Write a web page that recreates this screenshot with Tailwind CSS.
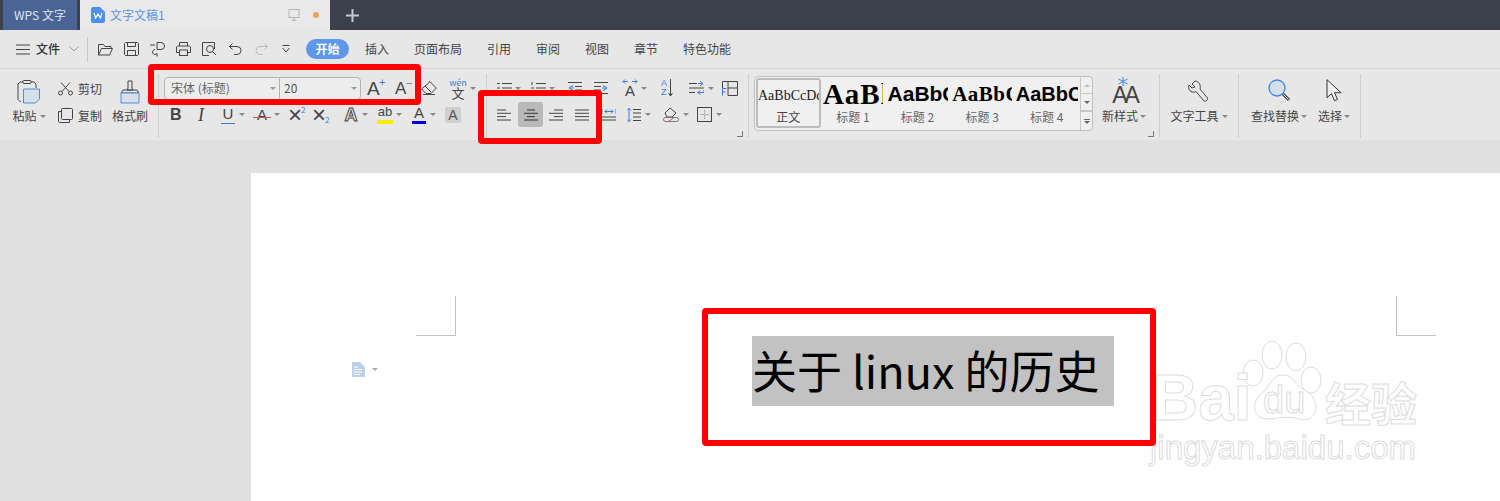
<!DOCTYPE html>
<html lang="zh-CN">
<head>
    <meta charset="UTF-8">
    <script src="https://cdn.jsdelivr.net/npm/@tailwindcss/browser@4"></script>
    <title>WPS 文字</title>
</head>
<body class="w-[1500px] h-[501px] overflow-hidden relative bg-[#e0e0e0] text-[#444] text-[12px] font-['Noto_Sans_CJK_SC','Noto_Sans',sans-serif]">

    <!-- tabs -->
    <div class="h-[30px] bg-[#3c404d] flex items-stretch">
        <div class="ml-[3px] w-[74px] bg-[#4a6593] text-[#dfe6f2] flex items-center justify-center">WPS 文字</div>
        <div class="ml-[3px] w-[250px] bg-[#e9e9e9] flex items-center">
            <svg class="ml-[11px] w-[14px] h-[16px]" viewBox="0 0 14 16"><path d="M2 0h7l5 5v9a2 2 0 0 1-2 2H2a2 2 0 0 1-2-2V2a2 2 0 0 1 2-2z" fill="#4d8ff0"/><path d="M3 6l1.600 5L7 7l2.400 4L11 6" fill="none" stroke="#fff" stroke-width="1.200"/></svg>
            <span class="ml-[5px] text-[#5b94ea]">文字文稿1</span>
            <svg class="ml-[123px] w-[12px] h-[14px]" viewBox="0 0 12 14" fill="none" stroke="#b5b5b5"><rect x="1" y="1.500" width="10" height="8"/><path d="M6 9.500v3M3.500 12.500h5"/></svg>
            <span class="ml-[13px] w-[6px] h-[6px] rounded-full bg-[#eba35c]"></span>
        </div>
        <div class="ml-[16px] flex items-center">
            <svg class="w-[13px] h-[13px]" viewBox="0 0 13 13" stroke="#c6c8ce" stroke-width="2"><path d="M6.500 0v13M0 6.500h13"/></svg>
        </div>
    </div>

    <!-- menu -->
    <div class="h-[39px] bg-[#e7e7e7] flex items-center border-b border-[#d9d9d9]">
        <svg class="ml-[16px] w-[14px] h-[11px]" viewBox="0 0 14 11" stroke="#444"><path d="M0 1h14M0 5.500h14M0 10h14"/></svg>
        <span class="ml-[6px] w-[24px] font-medium text-[#333]">文件</span>
        <svg class="ml-[9px] w-[10px] h-[6px]" viewBox="0 0 10 6" fill="none" stroke="#999"><path d="M.5.500L5 5l4.500-4.500"/></svg>
        <span class="ml-[8px] w-px h-[25px] bg-[#c8c8c8]"></span>
        <svg class="ml-[10px] w-[15px] h-[13px]" viewBox="0 0 15 13" fill="none" stroke="#444"><path d="M.5 12V1.500h5l1.500 2h6v2M.5 12h11l3-6.500h-11z"/></svg>
        <svg class="ml-[11px] w-[15px] h-[14px]" viewBox="0 0 15 14" fill="none" stroke="#444"><path d="M1.500.500h12l1 1v11l-1 1h-12l-1-1v-11z"/><path d="M3.500.500v4h8v-4M3.500 13.500v-5h8v5"/></svg>
        <svg class="ml-[11px] w-[15px] h-[15px]" viewBox="0 0 15 15" fill="none" stroke="#444"><path d="M0 3h5M7 .500h4a3.500 3.500 0 0 1 0 7H7v-7zM5 7.500a2.500 2.500 0 1 0 2 4v3"/></svg>
        <svg class="ml-[11px] w-[15px] h-[14px]" viewBox="0 0 15 14" fill="none" stroke="#444"><path d="M3.500 4V.500h8V4M3.500 10.500h-3V5l1-1h12l1 1v5.500h-3"/><rect x="3.500" y="8" width="8" height="5.500"/></svg>
        <svg class="ml-[11px] w-[15px] h-[14px]" viewBox="0 0 15 14" fill="none" stroke="#444"><path d="M7 13.500H.5V.500h12V7"/><circle cx="8" cy="7" r="3.500"/><path d="M10.500 9.500l3.500 3.500"/></svg>
        <svg class="ml-[12px] w-[13px] h-[12px]" viewBox="0 0 13 12" fill="none" stroke="#444"><path d="M3.500.500L.5 3.500l3 3M.5 3.500H8a4 4 0 0 1 0 8H5"/></svg>
        <svg class="ml-[13px] w-[13px] h-[12px]" viewBox="0 0 13 12" fill="none" stroke="#bcbcbc"><path d="M9.500.500l3 3-3 3M12.500 3.500H5a4 4 0 0 0 0 8h3"/></svg>
        <svg class="ml-[14px] w-[8px] h-[8px]" viewBox="0 0 8 8" fill="none" stroke="#444"><path d="M.5.500h7M.5 3l3.500 4L7.500 3"/></svg>
        <span class="ml-[16px] w-[43px] h-[20px] rounded-full bg-[#5f97ea] text-white font-bold flex items-center justify-center">开始</span>
        <span class="ml-[16px] w-[24px]">插入</span>
        <span class="ml-[25px] w-[48px]">页面布局</span>
        <span class="ml-[25px] w-[24px]">引用</span>
        <span class="ml-[25px] w-[24px]">审阅</span>
        <span class="ml-[25px] w-[24px]">视图</span>
        <span class="ml-[25px] w-[24px]">章节</span>
        <span class="ml-[25px] w-[48px]">特色功能</span>
    </div>

    <!-- ribbon -->
    <div class="h-[71px] bg-[#e7e7e7] flex pt-[5px]">

        <!-- clipboard -->
        <div class="w-[159px] h-[64px] border-r border-[#cfcfcf] flex shrink-0">
            <div class="w-[56px] flex flex-col items-center">
                <svg class="mt-[6px] w-[23px] h-[24px]" viewBox="0 0 23 24" fill="none"><path d="M4 21.500H3l-2-2V4l2-2h3M14 2h3l2 2v4" stroke="#444"/><rect x="6" y=".5" width="8" height="3" rx="1" stroke="#444"/><path d="M6.500 9h16v10l-4 4h-12z" fill="#d8dfe9" stroke="#4d8fe0"/></svg>
                <span class="mt-[3px] ml-[2px] h-[18px] flex items-center"><span>粘贴</span><span class="ml-[3px] border-x-[3px] border-t-[3px] border-x-transparent border-t-[#888]"></span></span>
            </div>
            <div class="ml-[2px] w-[50px] flex flex-col">
                <div class="h-[27px] mt-[1px] flex items-center">
                    <svg class="w-[15px] h-[14px]" viewBox="0 0 15 14" fill="none" stroke="#444"><circle cx="2.500" cy="11" r="2"/><circle cx="12.500" cy="11" r="2"/><path d="M4 9.500L12 .5M11 9.500L3 .5"/></svg>
                    <span class="ml-[5px]">剪切</span>
                </div>
                <div class="h-[27px] flex items-center">
                    <svg class="w-[15px] h-[15px]" viewBox="0 0 15 15" fill="none" stroke="#444"><rect x="3.500" y=".5" width="11" height="11" rx="1"/><path d="M3.500 3.500h-3v10l1 1h10v-3"/></svg>
                    <span class="ml-[5px]">复制</span>
                </div>
            </div>
            <div class="ml-[4px] w-[36px] flex flex-col items-center">
                <svg class="mt-[6px] w-[20px] h-[24px]" viewBox="0 0 20 24" fill="none"><path d="M8 1h4v7l1 2h-6l1-2z" stroke="#444"/><path d="M1 13l2-3h14l2 3z" stroke="#444"/><path d="M1 13h18v10H1z" fill="#d8dfe9" stroke="#4d8fe0"/></svg>
                <span class="mt-[3px] h-[18px] flex items-center">格式刷</span>
            </div>
        </div>

        <!-- font -->
        <div class="w-[328px] h-[64px] border-r border-[#cfcfcf] shrink-0 relative">
            <div class="h-[26px] mt-[1px] flex items-center">
                <div class="ml-[5px] w-[197px] h-[23px] border border-[#b4b4b4] rounded-[4px] bg-[#ededed] flex items-center">
                    <div class="w-[115px] h-full border-r border-[#b4b4b4] flex items-center justify-between pl-[6px] pr-[3px] text-[#666]"><span>宋体 (标题)</span><span class="border-x-[3px] border-t-[3px] border-x-transparent border-t-[#999]"></span></div>
                    <div class="flex-1 h-full flex items-center justify-between pl-[4px] pr-[3px] text-[#555]"><span>20</span><span class="border-x-[3px] border-t-[3px] border-x-transparent border-t-[#999]"></span></div>
                </div>
                <span class="ml-[6px] w-[18px] text-[19px] leading-none text-[#444] relative font-['Liberation_Sans']">A<span class="absolute -top-[2px] left-[12px] text-[11px] text-[#3b7ddd]">+</span></span>
                <span class="ml-[10px] w-[18px] text-[17px] leading-none text-[#444] relative font-['Liberation_Sans']">A<span class="absolute -top-[2px] left-[11px] text-[11px] text-[#3b7ddd]">−</span></span>
                <svg class="ml-[8px] w-[16px] h-[14px]" viewBox="0 0 16 14" fill="none" stroke="#444"><path d="M9 .7L15.300 7 10 12.500H5L.7 8z"/><path d="M4 5l6 6M2 13.500h12"/></svg>
                <span class="ml-[13px] w-[16px] flex flex-col items-center leading-none"><span class="text-[9px] text-[#3b7ddd] leading-[9px]">wén</span><span class="text-[13px] leading-[12px]">文</span></span>
                <span class="ml-[4px] border-x-[3px] border-t-[3px] border-x-transparent border-t-[#888]"></span>
            </div>
            <div class="h-[27px] flex items-center">
                <span class="ml-[11px] w-[12px] text-[16px] font-bold leading-none font-['Liberation_Sans']">B</span>
                <span class="ml-[14px] w-[10px] text-center text-[18px] italic leading-none text-[#444] font-['Liberation_Serif']">I</span>
                <span class="ml-[15px] w-[14px] h-[18px] flex flex-col items-center leading-none"><span class="text-[15px] leading-[15px] font-['Liberation_Sans'] text-[#444]">U</span><span class="w-full h-px mt-[2px] bg-[#3b7ddd]"></span></span>
                <span class="ml-[4px] border-x-[3px] border-t-[3px] border-x-transparent border-t-[#888]"></span>
                <span class="ml-[8px] w-[18px] h-[16px] relative flex justify-center text-[15px] leading-[16px] font-['Liberation_Sans'] text-[#444]">A<span class="absolute left-0 right-0 top-[10px] h-px bg-[#d9534f]"></span></span>
                <span class="ml-[3px] border-x-[3px] border-t-[3px] border-x-transparent border-t-[#888]"></span>
                <span class="ml-[8px] w-[18px] flex items-start leading-none text-[#444]"><span class="text-[24px] leading-[18px] font-['Liberation_Sans'] font-light">×</span><span class="text-[8px] -ml-[1px] text-[#3b7ddd]">2</span></span>
                <span class="ml-[6px] w-[18px] flex items-end leading-none text-[#444]"><span class="text-[24px] leading-[18px] font-['Liberation_Sans'] font-light">×</span><span class="text-[8px] -ml-[1px] text-[#3b7ddd]">2</span></span>
                <span class="ml-[13px] w-[16px] text-center text-[18px] leading-none font-['Liberation_Sans'] font-bold text-[#eee] [-webkit-text-stroke:1px_#444]">A</span>
                <span class="ml-[3px] border-x-[3px] border-t-[3px] border-x-transparent border-t-[#888]"></span>
                <span class="ml-[9px] w-[16px] h-[18px] flex flex-col items-center"><span class="text-[13px] leading-[12px] font-['Liberation_Sans'] text-[#444]">ab</span><span class="w-full h-[4px] mt-[2px] bg-[#f6ee00]"></span></span>
                <span class="ml-[3px] border-x-[3px] border-t-[3px] border-x-transparent border-t-[#888]"></span>
                <span class="ml-[10px] w-[14px] h-[18px] flex flex-col items-center"><span class="text-[15px] leading-[14px] font-['Liberation_Sans'] text-[#444]">A</span><span class="w-full h-[3px] mt-[1px] bg-[#0000e0]"></span></span>
                <span class="ml-[4px] border-x-[3px] border-t-[3px] border-x-transparent border-t-[#888]"></span>
                <span class="ml-[9px] w-[16px] h-[16px] bg-[#cfcfcf] rounded-[2px] text-center text-[14px] leading-[16px] font-['Liberation_Sans'] text-[#555]">A</span>
            </div>
        </div>

        <!-- paragraph -->
        <div class="w-[262px] h-[64px] border-r border-[#cfcfcf] shrink-0 relative">
            <div class="h-[26px] mt-[1px] flex items-center">
                <svg class="ml-[10px] w-[15px] h-[12px]" viewBox="0 0 15 12" fill="none" stroke="#444"><path d="M5 1.500h10M5 6h10M5 10.500h10M0 1.500h3M0 6h3M0 10.500h3" stroke-dasharray="none"/></svg>
                <span class="ml-[3px] border-x-[3px] border-t-[3px] border-x-transparent border-t-[#888]"></span>
                <svg class="ml-[10px] w-[15px] h-[12px]" viewBox="0 0 15 12" fill="none" stroke="#444"><path d="M5 1.500h10M5 6h10M5 10.500h10M1 0v3M0 6h3M0 10.500h3"/></svg>
                <span class="ml-[3px] border-x-[3px] border-t-[3px] border-x-transparent border-t-[#888]"></span>
                <svg class="ml-[13px] w-[14px] h-[12px]" viewBox="0 0 14 12" fill="none"><path d="M0 .5h14M7 4.500h7M7 8h7M0 11.500h14" stroke="#444"/><path d="M5 3.500L1 6l4 2.500M1 6h5" stroke="#3b7ddd"/></svg>
                <svg class="ml-[12px] w-[14px] h-[12px]" viewBox="0 0 14 12" fill="none"><path d="M0 .5h14M0 4.500h7M0 8h7M0 11.500h14" stroke="#444"/><path d="M9 3.500L13 6 9 8.500M13 6H8" stroke="#3b7ddd"/></svg>
                <span class="ml-[14px] w-[16px] h-[18px] flex flex-col items-center">
                    <svg class="w-[16px] h-[5px]" viewBox="0 0 16 5" fill="none" stroke="#3b7ddd"><path d="M3 .5L1 2.500l2 2M1 2.500h5M13 .5l2 2-2 2M15 2.500h-5"/></svg>
                    <span class="text-[15px] leading-[13px] font-['Liberation_Sans'] text-[#444]">A</span>
                </span>
                <span class="ml-[3px] border-x-[3px] border-t-[3px] border-x-transparent border-t-[#888]"></span>
                <span class="ml-[14px] w-[13px] h-[18px] flex leading-none text-[#3b7ddd] font-['Liberation_Sans']"><span class="flex flex-col text-[9px] leading-[9px]"><span>A</span><span>Z</span></span><svg class="ml-[1px] w-[5px] h-[18px]" viewBox="0 0 5 18" fill="none" stroke="#444"><path d="M2.500 0v17M.5 14l2 3 2-3"/></svg></span>
                <svg class="ml-[15px] w-[15px] h-[14px]" viewBox="0 0 15 14" fill="none"><path d="M0 2.500h8M0 7h15M0 11.500h6" stroke="#444"/><path d="M11 0l3 2.500-3 2.500M14 2.500H9M15 9v2.500H9M11.500 9.500l-3 2 3 2" stroke="#3b7ddd"/></svg>
                <span class="ml-[4px] border-x-[3px] border-t-[3px] border-x-transparent border-t-[#888]"></span>
                <svg class="ml-[8px] w-[16px] h-[15px]" viewBox="0 0 16 15" fill="none"><path d="M.5 7V.5h15v14H6M6 .5v14M6 7h9.500" stroke="#444"/><path d="M.5 14.500V7.500h4M.5 11h3" stroke="#3b7ddd"/></svg>
            </div>
            <div class="h-[27px] flex items-center">
                <svg class="ml-[10px] w-[14px] h-[12px]" viewBox="0 0 14 12" stroke="#444"><path d="M0 1h9M0 4.300h14M0 7.600h9M0 11h14"/></svg>
                <span class="ml-[7px] w-[25px] h-[25px] rounded-[3px] bg-[#b9b9b9] flex items-center justify-center">
                    <svg class="w-[14px] h-[12px]" viewBox="0 0 14 12" stroke="#333"><path d="M3 1h8M0 4.300h14M3 7.600h8M0 11h14"/></svg>
                </span>
                <svg class="ml-[6px] w-[14px] h-[12px]" viewBox="0 0 14 12" stroke="#444"><path d="M5 1h9M0 4.300h14M5 7.600h9M0 11h14"/></svg>
                <svg class="ml-[12px] w-[14px] h-[12px]" viewBox="0 0 14 12" stroke="#444"><path d="M0 1h14M0 4.300h14M0 7.600h14M0 11h14"/></svg>
                <svg class="ml-[13px] w-[14px] h-[12px]" viewBox="0 0 14 12" fill="none"><path d="M0 8h14M0 11h14" stroke="#444"/><path d="M0 0v5M14 0v5M3 2.500h8M3 2.500l2-2M3 2.500l2 2M11 2.500l-2-2M11 2.500l-2 2" stroke="#3b7ddd"/></svg>
                <svg class="ml-[11px] w-[14px] h-[14px]" viewBox="0 0 14 14" fill="none"><path d="M6 1.500h8M6 5h8M6 9h8M6 12.500h8" stroke="#444"/><path d="M2 0v14M0 2.500L2 .5l2 2M0 11.500l2 2 2-2" stroke="#3b7ddd"/></svg>
                <span class="ml-[4px] border-x-[3px] border-t-[3px] border-x-transparent border-t-[#888]"></span>
                <svg class="ml-[12px] w-[16px] h-[15px]" viewBox="0 0 16 15" fill="none"><path d="M2 6l5-5 6 5-4 4H4z" stroke="#444"/><rect x=".5" y="10.500" width="15" height="4" rx="2" stroke="#777"/><path d="M6 14l5-3.500" stroke="#d9534f"/></svg>
                <span class="ml-[4px] border-x-[3px] border-t-[3px] border-x-transparent border-t-[#888]"></span>
                <svg class="ml-[8px] w-[15px] h-[15px]" viewBox="0 0 15 15" fill="none"><rect x=".5" y=".5" width="14" height="14" stroke="#444"/><path d="M7.500 3v9M3 7.500h9" stroke="#999" stroke-dasharray="1.500 1"/></svg>
                <span class="ml-[4px] border-x-[3px] border-t-[3px] border-x-transparent border-t-[#888]"></span>
            </div>
            <span class="absolute left-[250px] top-[57px] w-[6px] h-[6px] border-r border-b border-[#777]"></span>
        </div>

        <!-- styles gallery -->
        <div class="ml-[5px] mt-[2px] w-[339px] h-[55px] border border-[#c0c0c0] rounded-[4px] bg-[#f0f0f0] flex shrink-0 overflow-hidden">
            <div class="w-[65px] h-[50px] mt-px ml-px border-2 border-[#bcbcbc] rounded-[3px] flex flex-col items-center overflow-hidden">
                <span class="mt-[2px] h-[27px] w-full whitespace-nowrap overflow-hidden text-[14px] leading-[27px] text-[#222] font-['Liberation_Serif']">AaBbCcDd</span>
                <span class="text-[12px] leading-[16px]">正文</span>
            </div>
            <div class="w-[65px] flex flex-col items-center overflow-hidden">
                <span class="mt-[1px] h-[31px] w-[60px] whitespace-nowrap overflow-hidden text-[29px] leading-[32px] font-bold text-black font-['Liberation_Serif'] tracking-[1px]">AaBl</span>
                <span class="leading-[16px] text-[#666]">标题 1</span>
            </div>
            <div class="w-[65px] flex flex-col items-center overflow-hidden">
                <span class="mt-[1px] h-[31px] w-[60px] whitespace-nowrap overflow-hidden text-[21px] leading-[32px] font-bold text-black font-['Liberation_Sans']">AaBbC</span>
                <span class="leading-[16px] text-[#666]">标题 2</span>
            </div>
            <div class="w-[65px] flex flex-col items-center overflow-hidden">
                <span class="mt-[1px] h-[31px] w-[60px] whitespace-nowrap overflow-hidden text-[21px] leading-[32px] font-bold text-black font-['Liberation_Serif'] tracking-[.5px]">AaBbC</span>
                <span class="leading-[16px] text-[#666]">标题 3</span>
            </div>
            <div class="w-[65px] flex flex-col items-center overflow-hidden">
                <span class="mt-[1px] h-[31px] w-[62px] whitespace-nowrap overflow-hidden text-[20px] leading-[32px] font-bold text-black font-['Liberation_Sans']">AaBbC</span>
                <span class="leading-[16px] text-[#666]">标题 4</span>
            </div>
            <div class="w-[12px] ml-px border-l border-[#c8c8c8] flex flex-col">
                <span class="h-[17px] border-b border-[#c8c8c8] flex items-center justify-center"><span class="border-x-[3px] border-b-[3px] border-x-transparent border-b-[#c4c4c4]"></span></span>
                <span class="h-[18px] border-b-2 border-[#c8c8c8] flex items-center justify-center"><span class="border-x-[3px] border-t-[3px] border-x-transparent border-t-[#666]"></span></span>
                <span class="flex-1 flex flex-col items-center justify-center"><span class="w-[6px] h-px mb-[1px] bg-[#666]"></span><span class="border-x-[3px] border-t-[3px] border-x-transparent border-t-[#666]"></span></span>
            </div>
        </div>

        <!-- new style -->
        <div class="w-[67px] h-[64px] border-r border-[#cfcfcf] shrink-0 relative flex flex-col items-center">
            <svg class="mt-[3px] -ml-[6px] w-[10px] h-[9px]" viewBox="0 0 10 9" stroke="#3b86e8"><path d="M5 0v9M.5 2l9 5M9.500 2l-9 5"/></svg>
            <span class="-ml-[3px] w-[26px] h-[18px] flex items-end justify-center text-[23px] leading-[18px] text-[#444] font-['Liberation_Sans'] tracking-[-3px]">AA</span>
            <span class="mt-[3px] h-[18px] -ml-[4px] flex items-center"><span>新样式</span><span class="ml-[2px] border-x-[3px] border-t-[3px] border-x-transparent border-t-[#888]"></span></span>
            <span class="absolute left-[55px] top-[57px] w-[6px] h-[6px] border-r border-b border-[#777]"></span>
        </div>

        <!-- text tools -->
        <div class="w-[79px] h-[64px] border-r border-[#cfcfcf] shrink-0 flex flex-col items-center">
            <svg class="mt-[6px] w-[22px] h-[22px]" viewBox="0 0 22 22" fill="none" stroke="#444"><path d="M7 1L4 4l3 3-3 1-3-3c-1 3 0 6 3 7 2 .5 3 0 4-.5l8 9.500c1 1 4.500-1 3.500-3L12 9c1-3-.5-8-5-8z"/></svg>
            <span class="mt-[5px] h-[18px] flex items-center"><span>文字工具</span><span class="ml-[3px] border-x-[3px] border-t-[3px] border-x-transparent border-t-[#888]"></span></span>
        </div>

        <!-- find / select -->
        <div class="w-[122px] h-[64px] border-r border-[#cfcfcf] shrink-0 flex">
            <div class="ml-[9px] w-[62px] flex flex-col items-center">
                <svg class="mt-[5px] w-[23px] h-[23px]" viewBox="0 0 23 23" fill="none"><circle cx="9" cy="9" r="8" fill="#d8dfe9" stroke="#3b86e8" stroke-width="1.300"/><path d="M15 15l6 6" stroke="#444" stroke-width="3"/><path d="M15.500 15.500l5 5" stroke="#eee"/></svg>
                <span class="mt-[5px] h-[18px] flex items-center"><span>查找替换</span><span class="ml-[2px] border-x-[3px] border-t-[3px] border-x-transparent border-t-[#888]"></span></span>
            </div>
            <div class="ml-[6px] w-[36px] flex flex-col items-center">
                <svg class="mt-[5px] w-[16px] h-[23px]" viewBox="0 0 16 23" fill="none" stroke="#333"><path d="M1 .7v18l4.500-4 3 7 3-1.500-3-6.500H15z" fill="#efefef"/></svg>
                <span class="mt-[5px] h-[18px] flex items-center"><span>选择</span><span class="ml-[2px] border-x-[3px] border-t-[3px] border-x-transparent border-t-[#888]"></span></span>
            </div>
        </div>
    </div>

    <!-- page -->
    <div class="ml-[251px] mt-[33px] h-[328px] bg-white"></div>

    <!-- crop marks and paragraph marker on the page -->
    <span class="absolute left-[416px] top-[296px] w-[40px] h-[40px] border-r border-b border-[#c2c2c2]"></span>
    <span class="absolute left-[1396px] top-[296px] w-[40px] h-[40px] border-l border-b border-[#c2c2c2]"></span>
    <div class="absolute left-[352px] top-[362px] flex items-center">
        <svg class="w-[13px] h-[15px]" viewBox="0 0 13 15"><path d="M0 0h8l5 5v10H0z" fill="#bdd0ea"/><path d="M2 5h4M2 7.500h8M2 10h8M2 12.500h6" stroke="#fff"/></svg>
        <span class="ml-[7px] border-x-[3px] border-t-[3px] border-x-transparent border-t-[#aaa]"></span>
    </div>

    <!-- selected title -->
    <div class="absolute left-[752px] top-[336px] w-[362px] h-[70px] bg-[#c2c2c2] text-[45px] leading-[67px] text-black whitespace-nowrap">关于 linux 的历史</div>

    <!-- watermark -->
    <div class="absolute left-[1150px] top-[335px] w-[270px] h-[135px] text-white font-['Liberation_Sans'] [-webkit-text-stroke:1px_#dcdcdc]">
        <svg class="absolute left-[85px] top-[5px] w-[90px] h-[90px]" viewBox="0 0 90 90" fill="#fff" stroke="#dcdcdc"><ellipse cx="18" cy="33" rx="10" ry="13"/><ellipse cx="37" cy="15" rx="10" ry="14"/><ellipse cx="61" cy="17" rx="10" ry="14"/><ellipse cx="76" cy="40" rx="10" ry="13"/><path d="M47 35c-10 0-12 12-22 20-8 7-8 24 8 24 8 0 20-4 30 0 14 4 22-8 16-20-4-8-14-10-18-16-4-6-8-8-14-8z"/></svg>
        <span class="absolute left-[2px] top-[28px] text-[64px] leading-[70px] font-bold">Bai</span>
        <span class="absolute left-[113px] top-[40px] text-[38px] leading-[50px]">du</span>
        <span class="absolute left-[175px] top-[36px] text-[46px] leading-[60px] font-bold font-['Noto_Sans_CJK_SC']">经验</span>
        <span class="absolute left-0 top-[92px] text-[33px] leading-[42px] whitespace-nowrap">jingyan.baidu.com</span>
    </div>

    <!-- red annotation boxes -->
    <div class="absolute left-[148px] top-[64px] w-[273px] h-[41px] border-[6px] border-[#ff0000] rounded-[4px]"></div>
    <div class="absolute left-[478px] top-[90px] w-[124px] h-[54px] border-[6px] border-[#ff0000] rounded-[4px]"></div>
    <div class="absolute left-[702px] top-[308px] w-[454px] h-[138px] border-[6px] border-[#ff0000] rounded-[4px]"></div>
</body>
</html>
